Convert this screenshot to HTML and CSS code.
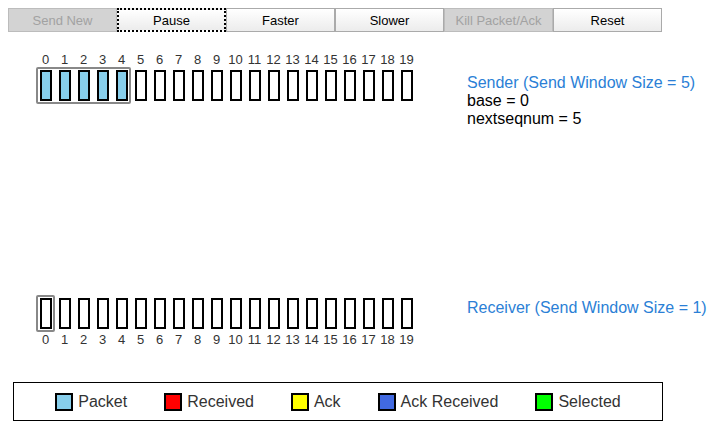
FILE: index.html
```html
<!DOCTYPE html>
<html>
<head>
<meta charset="utf-8">
<link rel="stylesheet" href="styles.css">
</head>
<body>
<div class="toolbar">
<button class="btn" disabled>Send New</button><button class="btn focus">Pause</button><button class="btn">Faster</button><button class="btn">Slower</button><button class="btn" disabled>Kill Packet/Ack</button><button class="btn">Reset</button>
</div>

<section class="row sender">
  <div class="lane">
    <div class="labels"><span>0</span><span>1</span><span>2</span><span>3</span><span>4</span><span>5</span><span>6</span><span>7</span><span>8</span><span>9</span><span>10</span><span>11</span><span>12</span><span>13</span><span>14</span><span>15</span><span>16</span><span>17</span><span>18</span><span>19</span></div>
    <div class="cells">
      <div class="window"><span class="cell pkt"></span><span class="cell pkt"></span><span class="cell pkt"></span><span class="cell pkt"></span><span class="cell pkt"></span></div>
      <span class="cell"></span><span class="cell"></span><span class="cell"></span><span class="cell"></span><span class="cell"></span><span class="cell"></span><span class="cell"></span><span class="cell"></span><span class="cell"></span><span class="cell"></span><span class="cell"></span><span class="cell"></span><span class="cell"></span><span class="cell"></span><span class="cell"></span>
    </div>
  </div>
  <div class="info sender-info">
    <div class="title">Sender (Send Window Size = 5)</div>
    <div>base = 0</div>
    <div>nextseqnum = 5</div>
  </div>
</section>

<section class="row receiver">
  <div class="lane">
    <div class="cells">
      <div class="window"><span class="cell"></span></div>
      <span class="cell"></span><span class="cell"></span><span class="cell"></span><span class="cell"></span><span class="cell"></span><span class="cell"></span><span class="cell"></span><span class="cell"></span><span class="cell"></span><span class="cell"></span><span class="cell"></span><span class="cell"></span><span class="cell"></span><span class="cell"></span><span class="cell"></span><span class="cell"></span><span class="cell"></span><span class="cell"></span><span class="cell"></span>
    </div>
    <div class="labels"><span>0</span><span>1</span><span>2</span><span>3</span><span>4</span><span>5</span><span>6</span><span>7</span><span>8</span><span>9</span><span>10</span><span>11</span><span>12</span><span>13</span><span>14</span><span>15</span><span>16</span><span>17</span><span>18</span><span>19</span></div>
  </div>
  <div class="info receiver-info">
    <div class="title">Receiver (Send Window Size = 1)</div>
  </div>
</section>

<div class="legend">
  <div class="item"><span class="swatch packet"></span><span>Packet</span></div>
  <div class="item"><span class="swatch received"></span><span>Received</span></div>
  <div class="item"><span class="swatch ack"></span><span>Ack</span></div>
  <div class="item"><span class="swatch ackrec"></span><span>Ack Received</span></div>
  <div class="item"><span class="swatch selected"></span><span>Selected</span></div>
</div>
</body>
</html>
```

FILE: styles.css
```css
html, body {
  background: #fff;
}
body {
  margin: 8px;
  font-family: "Liberation Sans", Arial, sans-serif;
  color: #000;
}

.toolbar {
  display: flex;
  height: 24px;
}
.btn {
  box-sizing: border-box;
  width: 109px;
  height: 24px;
  margin: 0;
  padding: 0;
  font-family: "Liberation Sans", Arial, sans-serif;
  font-size: 13px;
  color: #000;
  border: 1px solid #aaaaaa;
  background: linear-gradient(#ffffff, #ececec);
}
.btn:disabled {
  background: #d3d3d3;
  color: #a2a2a2;
  border-color: #bcbcbc;
}
.btn.focus {
  border: 2px dotted #000;
}

.row {
  display: flex;
  align-items: flex-start;
}
.sender {
  margin-top: 20px;
}
.receiver {
  margin-top: 167px;
}

.lane {
  margin-left: 28px;
  width: 380px;
}
.labels {
  display: flex;
  font-size: 13px;
  line-height: 15px;
  color: #333;
}
.labels span {
  width: 19px;
  text-align: center;
}
.cells {
  display: flex;
  align-items: center;
  height: 37px;
}
.window {
  display: flex;
  padding: 3px 0;
  outline: 2px solid #888;
  outline-offset: -2px;
  border-radius: 2px;
}
.cell {
  box-sizing: border-box;
  width: 12px;
  height: 31px;
  margin: 0 3px 0 4px;
  border: 2px solid #000;
  background: #fff;
}
.cell.pkt {
  background: #87ceeb;
}

.info {
  margin-left: 51px;
  font-size: 16px;
  line-height: 18px;
  color: #000;
}
.sender-info {
  padding-top: 22px;
}
.receiver-info {
  padding-top: 4px;
}
.title {
  color: #2b7fd6;
}

.legend {
  box-sizing: border-box;
  margin: 35px 0 0 5px;
  width: 650px;
  height: 39px;
  border: 1px solid #000;
  display: flex;
  justify-content: center;
  align-items: center;
  gap: 37px;
  font-size: 16px;
  color: #333;
}
.item {
  display: flex;
  align-items: center;
  gap: 5px;
}
.swatch {
  box-sizing: border-box;
  width: 18px;
  height: 18px;
  border: 2px solid #000;
}
.packet { background: #87ceeb; }
.received { background: #ff0000; }
.ack { background: #ffff00; }
.ackrec { background: #4169e1; }
.selected { background: #00ff00; }
```
